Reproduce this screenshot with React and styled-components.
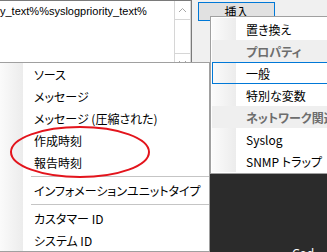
import React from 'react';
import styled, { createGlobalStyle } from 'styled-components';

const GlobalStyle = createGlobalStyle`
  html, body { margin: 0; padding: 0; }
  body {
    width: 327px;
    height: 252px;
    overflow: hidden;
    background: #f0f0f0;
    font-family: "Noto Sans CJK JP", "Noto Sans", sans-serif;
  }
`;

// Window behind the menus
const Stage = styled.div`
  position: relative;
  width: 327px;
  height: 252px;
  overflow: hidden;
  background: #f0f0f0;`

const TopRow = styled.div`
  display: flex;
  align-items: flex-start;`

const TextBox = styled.div`
  display: flex;
  margin-left: -10px;
  width: 202px;
  height: 80px;
  box-sizing: border-box;
  background: #fff;
  border-top: 1px solid #7a7a7a;
  border-right: 1px solid #7a7a7a;`

const TextArea = styled.div`
  flex: 1;
  padding: 2px 0 0 10px;
  font-family: "Liberation Sans", sans-serif;
  font-size: 11px;
  line-height: 16px;
  color: #000;
  white-space: nowrap;
  overflow: hidden;`

const ScrollBar = styled.div`
  width: 17px;
  display: flex;
  flex-direction: column;
  box-sizing: border-box;
  border-left: 1px solid #d6d6d6;
  border-right: 1px solid #d6d6d6;`

const ArrowCell = styled.div`
  height: 18px;
  display: flex;
  align-items: center;
  justify-content: center;
  ${props => (props.$down ? `border-top: 1px solid #d6d6d6;` : `border-bottom: 1px solid #d6d6d6;`)}
`

const Track = styled.div`
  height: 33px;`

const InsertButton = styled.button`
  margin: 2px 0 0 6px;
  width: 77px;
  height: 19px;
  padding: 0;
  border: 1px solid #0078d7;
  background: #e1e1e1;
  font-family: "Noto Sans CJK JP", sans-serif;
  font-size: 12px;
  line-height: 15px;
  color: #000;`

const DarkPane = styled.div`
  position: absolute;
  left: 210px;
  top: 172px;
  width: 117px;
  height: 80px;
  background: #2b2b2b;
  z-index: 1;`

const DarkText = styled.div`
  position: absolute;
  left: 82px;
  top: 73px;
  font-family: "Noto Sans", sans-serif;
  font-size: 12px;
  color: #fff;`

// Popup menus
const Menu = styled.div`
  position: absolute;
  left: ${props => props.$left}px;
  top: ${props => props.$top}px;
  width: ${props => props.$width}px;
  box-sizing: border-box;
  border: 1px solid #a0a0a0;
  padding: ${props => props.$pad}px;
  background: linear-gradient(to right, #fbfbfb, #ececec) 0 0 / 24px 100% no-repeat, #fff;
  background-origin: content-box;
  z-index: ${props => props.$z};`

const MenuItem = styled.div`
  height: 22px;
  box-sizing: border-box;
  display: flex;
  align-items: center;
  padding-left: ${props => props.$indent}px;
  font-size: 12px;
  color: #000;
  white-space: nowrap;
  overflow: hidden;
  font-feature-settings: "palt";

  ${props => (props.$selected ? `border: 1px solid #0078d7; padding-left: ${props.$indent - 1}px;` : null)}
  ${props => (props.$header ? `background: #efefef; color: #6d6d6d; font-weight: bold;` : null)}
`

const Separator = styled.div`
  height: 6px;
  display: flex;
  align-items: center;
  margin-left: 32px;

  &::after {
    content: "";
    flex: 1;
    height: 1px;
    background: #c5c5c5;
  }
`

const Highlight = styled.svg`
  position: absolute;
  left: 0;
  top: 0;
  z-index: 4;
  pointer-events: none;`

function Chevron({ down }) {
  return (
    <svg width="9" height="6" viewBox="0 0 9 6">
      <path d={down ? 'M1 1 L4.5 4.5 L8 1' : 'M1 5 L4.5 1.5 L8 5'} fill="none" stroke="#a5a5a5" strokeWidth="1" />
    </svg>
  );
}

const rightItems = [
  { label: '置き換え' },
  { label: 'プロパティ', header: true },
  { label: '一般', selected: true },
  { label: '特別な変数' },
  { label: 'ネットワーク関連', header: true },
  { label: 'Syslog' },
  { label: 'SNMP トラップ' },
];

const leftItems = [
  'ソース',
  'メッセージ',
  'メッセージ (圧縮された)',
  '作成時刻',
  '報告時刻',
  '-',
  'インフォメーションユニットタイプ',
  '-',
  'カスタマー ID',
  'システム ID',
];

function App() {
  return (
    <Stage>
      <GlobalStyle />
      <TopRow>
        <TextBox>
          <TextArea>y_text%%syslogpriority_text%</TextArea>
          <ScrollBar>
            <ArrowCell><Chevron /></ArrowCell>
            <Track />
            <ArrowCell $down><Chevron down /></ArrowCell>
          </ScrollBar>
        </TextBox>
        <InsertButton>挿入</InsertButton>
      </TopRow>

      <DarkPane>
        <DarkText>Cod</DarkText>
      </DarkPane>

      <Menu $left={210} $top={16} $width={140} $pad={1} $z={2}>
        {rightItems.map(item => (
          <MenuItem key={item.label} $indent={34} $header={item.header} $selected={item.selected}>
            {item.label}
          </MenuItem>
        ))}
      </Menu>

      <Menu $left={-2} $top={62} $width={212} $pad={0} $z={3}>
        {leftItems.map((label, i) =>
          label === '-' ? <Separator key={i} /> : <MenuItem key={i} $indent={35}>{label}</MenuItem>
        )}
      </Menu>

      <Highlight width="327" height="252">
        <ellipse cx="80" cy="152" rx="69" ry="25" fill="none" stroke="#e3141c" strokeWidth="2" />
      </Highlight>
    </Stage>
  );
}

export default App;
